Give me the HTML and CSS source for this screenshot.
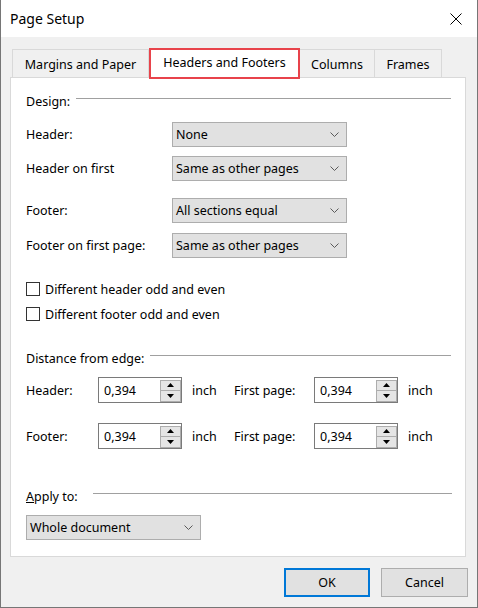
FILE: index.html
```html
<!DOCTYPE html>
<html>
<head>
<meta charset="utf-8">
<link rel="stylesheet" href="styles.css">
</head>
<body>
<div class="window">
  <div class="titlebar">
    <span class="title">Page Setup</span>
    <svg class="close" width="12" height="12" viewBox="0 0 12 12"><path d="M0.5 0.5 L11.5 11.5 M11.5 0.5 L0.5 11.5" stroke="#000" stroke-width="1" fill="none"/></svg>
  </div>
  <div class="tabs">
    <div class="tab tab-first">Margins and Paper</div>
    <div class="tab tab-active">Headers and Footers</div>
    <div class="tab tab-columns">Columns</div>
    <div class="tab tab-frames">Frames</div>
  </div>
  <div class="panel">
    <div class="group-head">Design:</div>

    <div class="row row-1">
      <span class="label">Header:</span>
      <div class="combo"><span>None</span><svg width="9" height="5" viewBox="0 0 9 5"><polyline points="0.5,0.5 4.5,4.5 8.5,0.5" fill="none" stroke="#5a5a5a" stroke-width="1"/></svg></div>
    </div>
    <div class="row row-2">
      <span class="label">Header on first</span>
      <div class="combo"><span>Same as other pages</span><svg width="9" height="5" viewBox="0 0 9 5"><polyline points="0.5,0.5 4.5,4.5 8.5,0.5" fill="none" stroke="#5a5a5a" stroke-width="1"/></svg></div>
    </div>
    <div class="row row-3">
      <span class="label">Footer:</span>
      <div class="combo"><span>All sections equal</span><svg width="9" height="5" viewBox="0 0 9 5"><polyline points="0.5,0.5 4.5,4.5 8.5,0.5" fill="none" stroke="#5a5a5a" stroke-width="1"/></svg></div>
    </div>
    <div class="row row-4">
      <span class="label">Footer on first page:</span>
      <div class="combo"><span>Same as other pages</span><svg width="9" height="5" viewBox="0 0 9 5"><polyline points="0.5,0.5 4.5,4.5 8.5,0.5" fill="none" stroke="#5a5a5a" stroke-width="1"/></svg></div>
    </div>

    <div class="check-row check-1"><span class="check"></span><span>Different header odd and even</span></div>
    <div class="check-row check-2"><span class="check"></span><span>Different footer odd and even</span></div>

    <div class="group-head group-distance">Distance from edge:</div>

    <div class="spin-row spin-row-1">
      <span class="slabel">Header:</span>
      <div class="spin"><span>0,394</span><div class="spin-btns"><div class="sb"><svg width="7" height="4" viewBox="0 0 7 4"><polygon points="0,4 3.5,0 7,4" fill="#000"/></svg></div><div class="sb"><svg width="7" height="4" viewBox="0 0 7 4"><polygon points="0,0 3.5,4 7,0" fill="#000"/></svg></div></div></div>
      <span class="unit">inch</span>
      <span class="slabel2">First page:</span>
      <div class="spin"><span>0,394</span><div class="spin-btns"><div class="sb"><svg width="7" height="4" viewBox="0 0 7 4"><polygon points="0,4 3.5,0 7,4" fill="#000"/></svg></div><div class="sb"><svg width="7" height="4" viewBox="0 0 7 4"><polygon points="0,0 3.5,4 7,0" fill="#000"/></svg></div></div></div>
      <span class="unit">inch</span>
    </div>
    <div class="spin-row spin-row-2">
      <span class="slabel">Footer:</span>
      <div class="spin"><span>0,394</span><div class="spin-btns"><div class="sb"><svg width="7" height="4" viewBox="0 0 7 4"><polygon points="0,4 3.5,0 7,4" fill="#000"/></svg></div><div class="sb"><svg width="7" height="4" viewBox="0 0 7 4"><polygon points="0,0 3.5,4 7,0" fill="#000"/></svg></div></div></div>
      <span class="unit">inch</span>
      <span class="slabel2">First page:</span>
      <div class="spin"><span>0,394</span><div class="spin-btns"><div class="sb"><svg width="7" height="4" viewBox="0 0 7 4"><polygon points="0,4 3.5,0 7,4" fill="#000"/></svg></div><div class="sb"><svg width="7" height="4" viewBox="0 0 7 4"><polygon points="0,0 3.5,4 7,0" fill="#000"/></svg></div></div></div>
      <span class="unit">inch</span>
    </div>

    <div class="group-head group-apply"><span><u>A</u>pply to:</span></div>
    <div class="combo combo-apply"><span>Whole document</span><svg width="9" height="5" viewBox="0 0 9 5"><polyline points="0.5,0.5 4.5,4.5 8.5,0.5" fill="none" stroke="#5a5a5a" stroke-width="1"/></svg></div>
  </div>
  <div class="buttons">
    <div class="btn btn-ok">OK</div>
    <div class="btn btn-cancel">Cancel</div>
  </div>
</div>
</body>
</html>
```
FILE: styles.css
```css
* { box-sizing: border-box; }
body {
  margin: 0;
  font-family: "Segoe UI", "Noto Sans", sans-serif;
  font-size: 12.5px;
  color: #000;
  background: #fff;
}
.window {
  width: 478px;
  height: 608px;
  border: 1px solid #767676;
  border-top: none;
  background: #f0f0f0;
  display: flex;
  flex-direction: column;
}
.titlebar {
  height: 37px;
  flex: none;
  background: #fff;
  display: flex;
  align-items: center;
  justify-content: space-between;
  padding: 0 15px 0 9px;
}
.title { font-size: 14px; }
.close { display: block; }

.tabs {
  display: flex;
  align-items: flex-end;
  margin: 11px 0 0 11px;
  flex: none;
}
.tab {
  height: 28px;
  display: flex;
  align-items: center;
  justify-content: center;
  border-top: 1px solid #d9d9d9;
  border-right: 1px solid #d9d9d9;
  background: #f0f0f0;
  padding-top: 1px;
}
.tab-first { width: 137px; border-left: 1px solid #d9d9d9; }
.tab-active {
  width: 151px;
  height: 31px;
  margin-bottom: -2px;
  border: 2px solid #e8434b;
  background: #fff;
  position: relative;
  z-index: 1;
  padding-top: 0;
  padding-bottom: 3px;
}
.tab-columns { width: 75px; }
.tab-frames { width: 67px; }

.panel {
  margin-left: 9px;
  width: 456px;
  border: 1px solid #d9d9d9;
  background: #fff;
  padding: 16px 14px 16px 15px;
  flex: none;
}
.group-head {
  display: flex;
  height: 16px;
  line-height: 16px;
}
.group-head::after {
  content: "";
  flex: 1;
  border-top: 1px solid #a0a0a0;
  margin: 4px 0 0 6px;
  height: 0;
}
.group-apply::after { margin-left: 15px; margin-right: -1px; }

.row {
  display: flex;
  align-items: center;
  height: 25px;
}
.row-1 { margin-top: 12px; }
.row-2 { margin-top: 9px; }
.row-3 { margin-top: 17px; }
.row-4 { margin-top: 10px; }
.label { width: 146px; }

.combo {
  width: 175px;
  height: 25px;
  border: 1px solid #adadad;
  background: #e1e1e1;
  display: flex;
  align-items: center;
  justify-content: space-between;
  padding: 0 7px 0 3px;
}
.combo svg { display: block; }

.check-row {
  display: flex;
  align-items: center;
  height: 16px;
}
.check-1 { margin-top: 23px; }
.check-2 { margin-top: 9px; }
.check {
  width: 14px;
  height: 14px;
  border: 1px solid #333;
  background: #fff;
  margin-right: 5px;
}

.group-distance { margin-top: 29px; }

.spin-row {
  display: flex;
  align-items: center;
  height: 26px;
}
.spin-row-1 { margin-top: 10px; }
.spin-row-2 { margin-top: 20px; }
.slabel { width: 72px; }
.slabel2 { width: 80px; }
.unit { width: 52px; padding-left: 10px; }
.spin {
  width: 84px;
  height: 26px;
  border: 1px solid #7a7a7a;
  background: #fff;
  display: flex;
  align-items: center;
  justify-content: space-between;
  padding-left: 5px;
}
.spin-btns {
  display: flex;
  flex-direction: column;
  width: 21px;
  height: 22px;
  margin-top: 1px;
}
.sb {
  height: 11px;
  border: 1px solid #adadad;
  background: #e5e5e5;
  display: flex;
  align-items: center;
  justify-content: center;
}
.sb + .sb { border-top: none; }
.sb svg { display: block; }

.group-apply { margin-top: 40px; }
.combo-apply { margin-top: 10px; }

.buttons {
  display: flex;
  justify-content: flex-end;
  gap: 11px;
  margin-top: 11px;
  padding-right: 9px;
}
.btn {
  width: 86px;
  height: 29px;
  display: flex;
  align-items: center;
  justify-content: center;
  background: #e1e1e1;
  border: 1px solid #adadad;
}
.btn-ok { border: 2px solid #0078d7; }
.btn-cancel { width: 87px; }
```
